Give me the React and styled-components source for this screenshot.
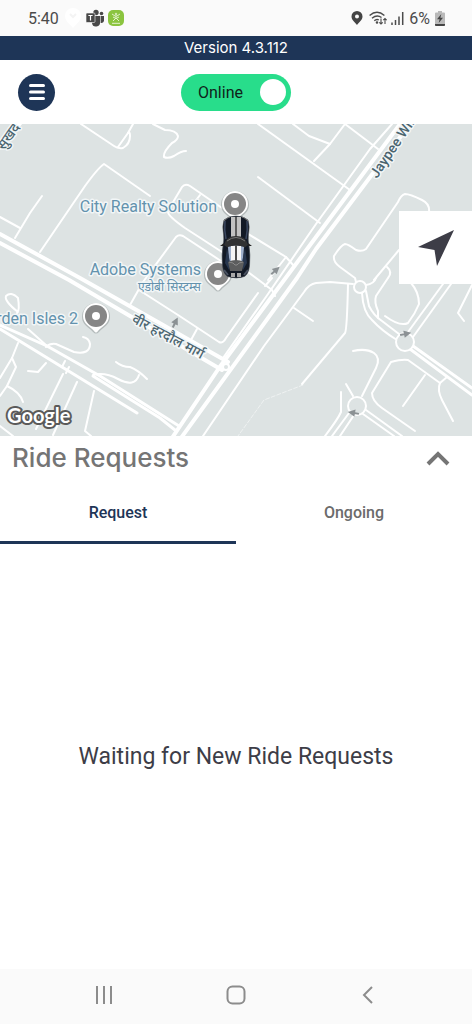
import { useState } from "react";
import styled, { createGlobalStyle } from "styled-components";

const roads = {
  thin: [
    "M81 0L114 22Q118 25 123 24Q130 20 130 12Q130 7 128 9",
    "M118 23L128 9L133 0",
    "M40 128L85 62Q98 44 104 40L150 72",
    "M42 72L30 89L15 114",
    "M0 93L20 104",
    "M153 0L165 6Q176 6 178 12Q178 16 172 19Q163 28 164 33Q168 35 174 32Q181 27 186 27",
    "M130 181L143 158L176 113Q179 110 183 112L224 139",
    "M139 166L178 191L219 218Q223 220 226 214L258 169",
    "M169 85L182 63Q185 59 190 62L222 84",
    "M168 88Q168 92 185 104L222 128",
    "M194 79L200 71",
    "M191 216L197 205",
    "M240 105L286 133L294 142",
    "M286 133L268 156",
    "M236 139L272 166L275 172",
    "M265 162L272 154",
    "M258 53L320 99",
    "M258 0L350 66",
    "M293 0L309 12L330 20L345 0L378 25",
    "M330 20L314 37",
    "M294 184L313 197",
    "M203 312L264 222L304 168Q309 160 316 159L330 158L353 160",
    "M302 260L345 209Q347 206 348 160",
    "M28 205L47 222",
    "M18 188Q4 177 6 172Q11 167 18 174Q20 186 17 189",
    "M46 223Q50 219 56 220L74 228Q90 231 90 220Q89 214 83 213",
    "M93 251Q105 248 118 255Q135 264 139 251",
    "M116 238Q122 243 130 243Q138 246 147 255",
    "M18 219L12 234L0 254",
    "M12 234L16 243L7 262Q20 268 23 278",
    "M7 262L0 272",
    "M46 239L38 248L28 247",
    "M63 250L36 305",
    "M77 258L53 311",
    "M94 267L85 307L91 312",
    "M0 302L13 312",
    "M65 237L62 243M69 243L66 249",
    "M429 88Q430 80 422 76Q410 70 405 70Q401 71 398 78L366 125Q362 128 356 126Q348 120 345 120Q341 121 334 132Q333 138 340 143L355 154L356 158",
    "M399 126L374 156",
    "M387 143Q393 148 388 154L376 172Q374 178 378 187V194",
    "M366 161Q374 160 376 154",
    "M362 169Q363 188 372 196Q382 207 397 216",
    "M366 167L369 182Q374 192 382 197L399 210",
    "M411 159Q419 168 419 180Q415 190 408 199Q400 203 385 192",
    "M443 160L408 208",
    "M451 160L413 213",
    "M472 161L458 189L464 197",
    "M353 227Q366 224 374 229Q381 234 376 244L362 272",
    "M346 260L353 272",
    "M341 268V288Q338 295 325 312",
    "M349 289L332 312",
    "M354 291L340 312",
    "M366 286L402 312",
    "M363 290L394 312",
    "M415 307L382 284Q372 277 372 269L391 238Q402 235 408 236L440 259L447 253",
    "M425 251L403 282",
    "M440 259Q437 266 442 276L453 297",
    "M392 0L370 25L316 100L268 170L223 234",
  ],
  medium: [
    "M0 205L18 216L137 289",
    "M0 201L47 222L100 252L179 302",
    "M93 252L160 294L175 306",
    "M413 222L472 264",
    "M410 225L472 271",
  ],
  wide: [
    "M0 110L80 154L156 197L228 238",
    "M0 119L69 156L130 192L222 246",
    "M400 0L316 113L273 171L219 244L172 314",
    "M410 0L316 125L297 154L181 314",
    "M22 -3L-4 28",
  ],
};

const places = [
  { x: 235, y: 80 },
  { x: 218, y: 150 },
  { x: 96, y: 192 },
];

const directions = [
  "translate(275 147) rotate(-42)",
  "translate(175 199) rotate(-64)",
  "translate(405 210) rotate(-12)",
  "translate(354 289) rotate(190)",
];

const tabs = ["Request", "Ongoing"];

function StatusBar() {
  return (
    <Status>
      <StatusGroup>
        <span>5:40</span>
        <svg width="18" height="22" viewBox="0 0 18 22">
          <path d="M9 1a8 8 0 0 0-8 8c0 5 5 8 8 12 3-4 8-7 8-12a8 8 0 0 0-8-8z" fill="#fff" />
          <path d="M6 7l3 3 3-3" fill="none" stroke="#f4f4f4" strokeWidth="2" />
        </svg>
        <svg width="18" height="18" viewBox="0 0 18 18" fill="#484848">
          <circle cx="10" cy="3.5" r="2.7" />
          <circle cx="15.5" cy="4.5" r="1.8" />
          <path d="M6 7h8v6a4 4 0 0 1-8 1z" />
          <path d="M14.6 7H18v5a3 3 0 0 1-3.4 2z" />
          <rect x="0" y="4" width="9" height="9.5" rx="1" stroke="#fafafa" strokeWidth=".6" />
          <path d="M2.4 6.5h4.2M4.5 6.5v5" stroke="#fff" strokeWidth="1.2" />
        </svg>
        <svg width="16" height="16" viewBox="0 0 16 16">
          <rect width="16" height="16" rx="5" fill="#8bc43f" />
          <g fill="none" stroke="#e3f2cc" strokeWidth="1">
            <path d="M4 4l3 2h2l3-2M8 6v2l-3 3M8 8l3 3M5 7l2 1M11 7l-2 1M4 13.3h8" />
            <circle cx="8" cy="4" r=".8" />
          </g>
        </svg>
      </StatusGroup>
      <StatusGroup>
        <svg width="14" height="14" viewBox="0 0 14 14">
          <path
            d="M6 0a5.5 5.5 0 0 0-5.5 5.5C.5 9 4 11 6 14c2-3 5.5-5 5.5-8.5A5.5 5.5 0 0 0 6 0zm0 3.5a2 2 0 1 1 0 4 2 2 0 0 1 0-4z"
            fill="#444"
          />
        </svg>
        <svg width="18" height="14" viewBox="0 0 18 14" fill="none" stroke="#4b4b4b" strokeWidth="1.4">
          <path d="M.6 4.5Q8 -2 15.4 4.5M3 7.2Q8 3 12.5 6.5M5.3 9.8Q7.5 7.6 9.8 9" />
          <circle cx="8" cy="11.5" r=".6" />
          <path d="M12 7.5V13M10.3 11.3L12 13l1.7-1.7M16 13V7.5M14.3 9.2L16 7.5l1.7 1.7" strokeWidth="1.1" />
        </svg>
        <svg width="13" height="13" viewBox="0 0 13 13" stroke="#4b4b4b" strokeWidth="1.5">
          <path d="M1 10.5V13M4.5 8V13M8 4.5V13M11.7 0V13" />
        </svg>
        <span>6%</span>
        <svg width="10" height="15" viewBox="0 0 10 15">
          <path d="M3 0h4v1.5h2q1 0 1 1V14q0 1-1 1H1q-1 0-1-1V2.5q0-1 1-1h2z" fill="#b9b9b9" />
          <path d="M0 13h10v1q0 1-1 1H1q-1 0-1-1z" fill="#444" />
          <path d="M6.3 3L2 8.2h2.6L3.7 12 8 6.8H5.4z" fill="#444" />
        </svg>
      </StatusGroup>
    </Status>
  );
}

function Car() {
  return (
    <g transform="translate(221 92)">
      <path
        d="M3 4Q8 0 15 0t12 4q2 6 .5 14-.8 6 .5 12 1.5 8 .5 20-1 8-5 10.5-8 3-17 0Q2.5 58 1.5 50q-1-12 .5-20 1.3-6 .5-12Q1 10 3 4z"
        fill="#121925"
        stroke="#4a4f55"
        strokeWidth=".6"
      />
      <path d="M4 5q-1 9 1 18M26 5q1 9-1 18" stroke="#3b4860" strokeWidth="1.5" fill="none" />
      <path d="M3 5q4-4 6-4M27 5q-4-4-6-4" stroke="#777" strokeWidth="1" fill="none" />
      <path d="M10 1h4v21h-4zM16 1h4v21h-4z" fill="#c2c2c2" />
      <path d="M14 1h2v21h-2z" fill="#5d5d5d" />
      <path d="M-1 30l4-3v3zM31 30l-4-3v3z" fill="#222" />
      <path d="M3 29Q5 20 15 20t12 9l-4 3Q15 28 7 32z" fill="#303132" />
      <path d="M6 25Q15 18 24 25" fill="none" stroke="#777" />
      <path d="M7 31q8-3 16 0l-1 14H8z" fill="#9fb0cc" />
      <path d="M10 30h4v17h-4zM16 30h4v17h-4z" fill="#f5f5f5" />
      <path d="M14 29h2v18h-2z" fill="#4c4c4c" />
      <path d="M6 32L4 47l4 7 1-8zM24 32l2 15-4 7-1-8z" fill="#27364e" />
      <path d="M7 46q8-4 16 0l-2 9H9z" fill="#5c5d5e" />
      <path d="M8 46l4 1 2 2h2l2-2 4-1" fill="none" stroke="#898989" />
      <path d="M10 57h4v4h-4zM16 57h4v4h-4z" fill="#a8a8a8" />
      <path d="M3 54l4 5M27 54l-4 5" stroke="#4a5261" strokeWidth="2" />
    </g>
  );
}

function MapView() {
  return (
    <MapArea>
      <MapSvg viewBox="0 0 472 312" preserveAspectRatio="xMidYMid slice" role="img" aria-label="Map">
        <g fill="none" stroke="#fff" strokeLinejoin="round" strokeLinecap="round">
          <g strokeWidth="2">{roads.thin.map((d) => <path key={d} d={d} />)}</g>
          <g strokeWidth="3">{roads.medium.map((d) => <path key={d} d={d} />)}</g>
          <g strokeWidth="4">{roads.wide.map((d) => <path key={d} d={d} />)}</g>
          <path d="M303 261L264 276L238 312" strokeWidth="1" strokeDasharray="4 2" opacity=".5" />
          <g fill="#dde3e3" strokeWidth="2">
            <circle cx="360" cy="163" r="6" />
            <circle cx="405" cy="218" r="9" />
            <circle cx="357" cy="282" r="9" />
            <circle cx="226" cy="243" r="3" />
          </g>
        </g>
        {directions.map((t) => (
          <path key={t} transform={t} d="M-5 0H3M0 -2L4 0L0 2z" fill="#8b9194" stroke="#8b9194" strokeWidth="2" />
        ))}

        <RoadName transform="translate(377 55) rotate(-56)">Jaypee Wi.</RoadName>
        <RoadName transform="translate(4 27) rotate(-55)">सुखद</RoadName>
        <RoadName transform="translate(131 198) rotate(28)">वीर हरदौल मार्ग</RoadName>

        <PlaceName x="217" y="88">City Realty Solution</PlaceName>
        <PlaceName x="201" y="151">Adobe Systems</PlaceName>
        <PlaceName x="201" y="167" $small>एडोबी सिस्टम्स</PlaceName>
        <PlaceName x="78" y="200">rden Isles 2</PlaceName>

        {places.map((p) => (
          <g key={p.x} transform={`translate(${p.x} ${p.y})`}>
            <path d="M-14 1a14 14 0 1 1 28 0c0 8-7 10-11 15q-3 3-6 0C-7 11-14 9-14 1z" fill="#9aa0a0" opacity=".6" />
            <path d="M-13 0a13 13 0 1 1 26 0c0 8-7 10-11 15q-2 3-4 0C-6 10-13 8-13 0z" fill="#fff" />
            <circle r="11" fill="#868686" />
            <circle r="4" fill="#fff" />
          </g>
        ))}
        <Car />
        <GoogleMark x="7" y="299">Google</GoogleMark>
      </MapSvg>
      <LocateButton aria-label="Locate me">
        <svg width="38" height="38" viewBox="0 0 38 38">
          <path d="M37 1L20 37L17.5 21L1 18z" fill="#3d3d47" />
        </svg>
      </LocateButton>
    </MapArea>
  );
}

export default function App() {
  const [online, setOnline] = useState(true);
  const [open, setOpen] = useState(true);
  const [tab, setTab] = useState("Request");

  return (
    <Screen>
      <GlobalStyle />
      <StatusBar />
      <Version>Version 4.3.112</Version>
      <Header>
        <MenuButton aria-label="Menu">
          <svg width="16" height="18" viewBox="0 0 16 18" stroke="#fff" strokeWidth="3" strokeLinecap="round">
            <path d="M1.5 2.5h13M1.5 9h13M1.5 15.5h13" />
          </svg>
        </MenuButton>
        <Toggle $on={online}>
          Online
          <input type="checkbox" checked={online} onChange={(e) => setOnline(e.target.checked)} />
        </Toggle>
      </Header>

      <MapView />

      <PanelHead>
        <h1>Ride Requests</h1>
        <button aria-label="Toggle requests" onClick={() => setOpen(!open)}>
          <svg width="24" height="16" viewBox="0 0 24 16" fill="none" stroke="#757575" strokeWidth="4">
            <path d="M2 14L12 4L22 14" />
          </svg>
        </button>
      </PanelHead>
      <Tabs role="tablist">
        {tabs.map((name) => (
          <Tab key={name} role="tab" aria-selected={tab === name} $active={tab === name} onClick={() => setTab(name)}>
            {name}
          </Tab>
        ))}
      </Tabs>
      <Content>{open && <p>Waiting for New Ride Requests</p>}</Content>

      <NavBar>
        <button aria-label="Recent apps">
          <svg width="18" height="18" viewBox="0 0 18 18" stroke="#8c8c8c" strokeWidth="2">
            <path d="M2 0V18M9 0V18M16 0V18" />
          </svg>
        </button>
        <button aria-label="Home">
          <svg width="20" height="20" viewBox="0 0 20 20" fill="none" stroke="#8c8c8c" strokeWidth="2">
            <rect x="1.5" y="1.5" width="17" height="17" rx="5" />
          </svg>
        </button>
        <button aria-label="Back">
          <svg width="12" height="18" viewBox="0 0 12 18" fill="none" stroke="#8c8c8c" strokeWidth="2">
            <path d="M10 1L2 9L10 17" />
          </svg>
        </button>
      </NavBar>
    </Screen>
  );
}

const GlobalStyle = createGlobalStyle`
  * {
    box-sizing: border-box;
  }
  body {
    margin: 0;
    background: #fff;
    font-family: Roboto, "Noto Sans", sans-serif;
  }
  button {
    border: none;
    padding: 0;
    background: transparent;
    font: inherit;
    cursor: pointer;
  }
  svg {
    display: block;
  }
`;

const Screen = styled.div`
  display: flex;
  flex-direction: column;
  min-height: 100vh;
`;

const Status = styled.div`
  display: flex;
  justify-content: space-between;
  align-items: center;
  height: 36px;
  padding: 0 27px;
  background: #fafafa;
  color: #4b4b4b;
  font-size: 16px;
`;

const StatusGroup = styled.div`
  display: flex;
  align-items: center;
  gap: 4px;
  span {
    padding: 0 1px;
  }
`;

const Version = styled.div`
  height: 24px;
  background: #1e3557;
  color: #fff;
  font-family: Inter, sans-serif;
  font-size: 15px;
  line-height: 24px;
  text-align: center;
`;

const Header = styled.header`
  display: grid;
  grid-template-columns: 1fr auto 1fr;
  align-items: center;
  height: 64px;
  padding: 0 18px;
`;

const MenuButton = styled.button`
  display: flex;
  align-items: center;
  justify-content: center;
  width: 37px;
  height: 37px;
  border-radius: 50%;
  && {
    background: #1e3557;
  }
`;

const Toggle = styled.label`
  display: flex;
  align-items: center;
  justify-content: space-between;
  width: 110px;
  height: 37px;
  padding: 0 5px 0 17px;
  border-radius: 19px;
  background: ${({ $on }) => ($on ? "#28dd8b" : "#c4c4c4")};
  color: #10231a;
  font-size: 16px;
  cursor: pointer;
  input {
    appearance: none;
    width: 26px;
    height: 26px;
    margin: 0;
    border-radius: 50%;
    background: #fff;
  }
`;

const MapArea = styled.section`
  position: relative;
  height: 312px;
  overflow: hidden;
  background: #dde3e3;
`;

const MapSvg = styled.svg`
  width: 100%;
  height: 100%;
`;

const PlaceName = styled.text`
  fill: #6392ad;
  font-size: ${({ $small }) => ($small ? "12px" : "16px")};
  text-anchor: end;
  stroke: #f2f6f7;
  stroke-width: 3px;
  stroke-linejoin: round;
  paint-order: stroke;
`;

const RoadName = styled.text`
  fill: #4a646f;
  font-size: 14px;
  font-weight: 500;
  stroke: #f2f6f7;
  stroke-width: 3px;
  stroke-linejoin: round;
  paint-order: stroke;
`;

const GoogleMark = styled.text`
  fill: #fff;
  font-family: Lato, sans-serif;
  font-size: 20px;
  font-weight: 700;
  stroke: #5a5a5a;
  stroke-width: 4px;
  stroke-linejoin: round;
  paint-order: stroke;
`;

const LocateButton = styled.button`
  position: absolute;
  top: 87px;
  right: 0;
  display: flex;
  align-items: center;
  justify-content: center;
  width: 73px;
  height: 73px;
  && {
    background: #fff;
  }
`;

const PanelHead = styled.div`
  display: flex;
  align-items: center;
  justify-content: space-between;
  height: 44px;
  padding: 0 22px 0 12px;
  h1 {
    margin: 0;
    color: #757575;
    font-family: Inter, sans-serif;
    font-size: 26px;
    font-weight: 500;
    line-height: 44px;
  }
`;

const Tabs = styled.div`
  display: flex;
`;

const Tab = styled.button`
  flex: 1;
  height: 64px;
  && {
    padding-top: 4px;
    border-bottom: 3px solid ${({ $active }) => ($active ? "#1e3557" : "transparent")};
    color: ${({ $active }) => ($active ? "#1e3557" : "#6b6b6b")};
    font-size: 16px;
    font-weight: 500;
  }
`;

const Content = styled.main`
  flex: 1;
  display: flex;
  align-items: center;
  justify-content: center;
  p {
    margin: 0;
    color: #3d3d47;
    font-size: 23px;
  }
`;

const NavBar = styled.nav`
  display: flex;
  justify-content: space-around;
  height: 55px;
  padding: 0 38px 4px;
  background: #fafafa;
  button {
    display: flex;
    flex: 1;
    align-items: center;
    justify-content: center;
  }
`;
